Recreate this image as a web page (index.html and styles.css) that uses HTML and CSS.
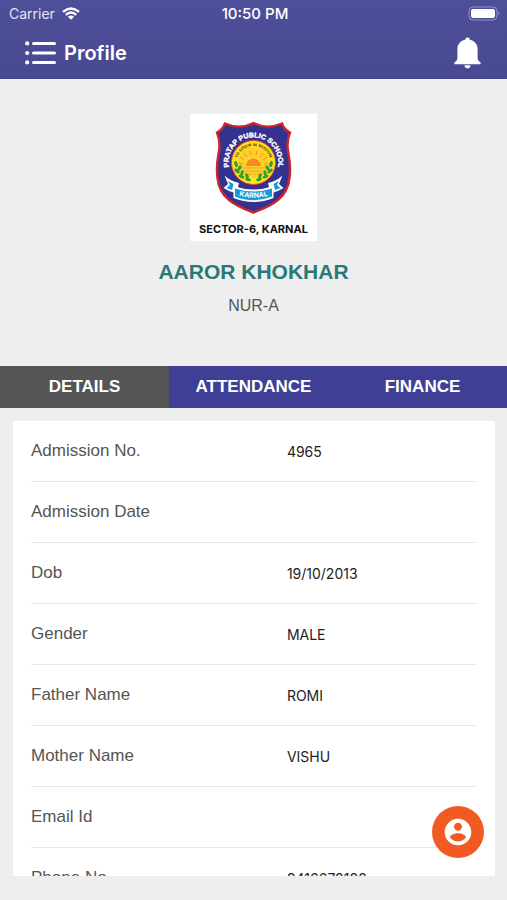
FILE: index.html
```html
<!DOCTYPE html>
<html lang="en">
<head>
<meta charset="utf-8">
<meta name="viewport" content="width=device-width, initial-scale=1">
<title>Profile</title>
<link rel="stylesheet" href="styles.css">
</head>
<body>

<header class="header">
  <div class="status">
    <div class="carrier">
      <span>Carrier</span>
      <svg width="18" height="13" viewBox="0 0 18 13" fill="none" stroke="#fff" stroke-width="2.4">
        <path d="M1 4.8Q9-2 17 4.8"/>
        <path d="M3.8 7.8Q9 3.4 14.2 7.8"/>
        <path d="M9 12.8L5.9 9.7Q9 7.3 12.1 9.7Z" fill="#fff" stroke="none"/>
      </svg>
    </div>
    <div class="time">10:50 PM</div>
    <div class="battery">
      <svg width="33" height="15" viewBox="0 0 33 15">
        <rect x="1" y="1" width="28" height="13" rx="4" fill="none" stroke="#9090c2"/>
        <rect x="3" y="3" width="24" height="9" rx="2" fill="#fff"/>
        <path d="M30.5 5.5Q32.6 7.5 30.5 9.5Z" fill="#9090c2"/>
      </svg>
    </div>
  </div>
  <div class="navbar">
    <button class="icon-btn" type="button" aria-label="Menu">
      <svg width="31" height="24" viewBox="0 0 31 24" fill="#fff">
        <circle cx="2.2" cy="2.4" r="2.1"/>
        <circle cx="2.2" cy="12" r="2.1"/>
        <circle cx="2.2" cy="21.4" r="2.1"/>
        <rect x="7" y="1" width="24" height="3" rx="1.5"/>
        <rect x="7" y="10.5" width="24" height="3" rx="1.5"/>
        <rect x="7" y="20" width="24" height="3" rx="1.5"/>
      </svg>
    </button>
    <h1>Profile</h1>
    <button class="icon-btn bell" type="button" aria-label="Notifications">
      <svg width="27" height="32" viewBox="0 0 27 32" fill="#fff">
        <path d="M13.5 0.5C12.2 0.5 11.4 1.4 11.2 2.8C6 4 3.4 7.6 3.4 12V20.5C3.4 23 2.4 24.3 0.4 25.4V27.2H26.6V25.4C24.6 24.3 23.6 23 23.6 20.5V12C23.6 7.6 21 4 15.8 2.8C15.6 1.4 14.8 0.5 13.5 0.5Z"/>
        <path d="M10.4 28.2H16.6C16.4 30.3 15.2 31.3 13.5 31.3C11.8 31.3 10.6 30.3 10.4 28.2Z"/>
      </svg>
    </button>
  </div>
</header>

<section class="student">
  <svg class="logo" viewBox="0 0 127 127" role="img" aria-label="Pratap Public School">
    <defs>
      <path id="arc-name" d="M39.8 55.5A24.8 24.8 0 1 1 87.2 55.5"/>
      <path id="arc-motto" d="M46.5 49A17 17 0 0 1 80.5 49"/>
      <path id="arc-city" d="M44 80Q63.500 87.500 83 80"/>
    </defs>
    <rect width="127" height="127" fill="#fff"/>
    <path d="M35 9.5Q50 16 63.5 9Q77 16 92 9.5Q94 15.5 100 18.5Q96 28 98.5 40Q101 53 99.5 64C97.5 83 84 91 63.5 98.5C43 91 29.5 83 27.5 64Q26 53 28.5 40Q31 28 27 18.5Q33 15.5 35 9.5Z" fill="#35318f" stroke="#c9252f" stroke-width="2.4"/>
    <circle cx="63.5" cy="48.5" r="22" fill="#ffe512" stroke="#e5484a"/>
    <circle cx="63.5" cy="48" r="15.5" fill="#fdd02a"/>
    <path d="M56 52A7.500 7.500 0 0 1 71 52Z" fill="#f58a25"/>
    <path d="M53 50L49 49M54 46L50 43M57 43L54 39M61 41L60 37M66 41L67 37M70 43L73 39M73 46L77 43M74 50L78 49" stroke="#f58a25"/>
    <path d="M52 54H75M54 57H73M57 60H70" stroke="#f2a529"/>
    <g fill="#339b3c">
      <ellipse cx="46" cy="50" rx="1.7" ry="3.2" transform="rotate(-15 46 50)"/>
      <ellipse cx="49.5" cy="54" rx="1.6" ry="3" transform="rotate(30 49.5 54)"/>
      <ellipse cx="47" cy="57" rx="1.6" ry="3.2" transform="rotate(-50 47 57)"/>
      <ellipse cx="52" cy="59" rx="1.6" ry="3" transform="rotate(10 52 59)"/>
      <ellipse cx="51.5" cy="62.5" rx="1.6" ry="3.2" transform="rotate(-65 51.5 62.5)"/>
      <ellipse cx="57" cy="62" rx="1.6" ry="3" transform="rotate(-25 57 62)"/>
      <ellipse cx="58" cy="65.5" rx="1.5" ry="3" transform="rotate(-75 58 65.5)"/>
      <ellipse cx="81" cy="50" rx="1.7" ry="3.2" transform="rotate(15 81 50)"/>
      <ellipse cx="77.5" cy="54" rx="1.6" ry="3" transform="rotate(-30 77.5 54)"/>
      <ellipse cx="80" cy="57" rx="1.6" ry="3.2" transform="rotate(50 80 57)"/>
      <ellipse cx="75" cy="59" rx="1.6" ry="3" transform="rotate(-10 75 59)"/>
      <ellipse cx="75.5" cy="62.5" rx="1.6" ry="3.2" transform="rotate(65 75.5 62.5)"/>
      <ellipse cx="70" cy="62" rx="1.6" ry="3" transform="rotate(25 70 62)"/>
      <ellipse cx="69" cy="65.5" rx="1.5" ry="3" transform="rotate(75 69 65.5)"/>
    </g>
    <path d="M34.5 61.5Q40 67 49 69L47 77L45 84L48 80L45 79Q38 77 33.5 74L38 70Z" fill="#fff"/>
    <path d="M92.5 61.5Q87 67 78 69L80 77L82 84L79 80L82 79Q89 77 93.5 74L89 70Z" fill="#fff"/>
    <path d="M38 67L43.5 70L42 76L36.5 74L40 71Z" fill="#169bd7"/>
    <path d="M89 67L83.5 70L85 76L90.5 74L87 71Z" fill="#169bd7"/>
    <path d="M43.5 72Q63.5 79 83.5 72V84Q63.5 92 43.5 84Z" fill="#fff"/>
    <path d="M45 74.5Q63.500 80.500 82 74.500V82.500Q63.500 90 45 82.500Z" fill="#169bd7"/>
    <text class="logo-name" text-anchor="middle"><textPath href="#arc-name" startOffset="50%">PRATAP PUBLIC SCHOOL</textPath></text>
    <text class="logo-motto" text-anchor="middle"><textPath href="#arc-motto" startOffset="50%">TO GROW IN WISDOM</textPath></text>
    <text class="logo-city" text-anchor="middle"><textPath href="#arc-city" startOffset="50%">KARNAL</textPath></text>
    <text class="logo-sector" x="63.5" y="119" text-anchor="middle">SECTOR-6, KARNAL</text>
  </svg>
  <h2>AAROR KHOKHAR</h2>
  <p>NUR-A</p>
</section>

<nav class="tabs">
  <button class="tab active" type="button">DETAILS</button>
  <button class="tab" type="button">ATTENDANCE</button>
  <button class="tab" type="button">FINANCE</button>
</nav>

<main class="card">
  <table class="details">
    <tr><th scope="row">Admission No.</th><td>4965</td></tr>
    <tr><th scope="row">Admission Date</th><td></td></tr>
    <tr><th scope="row">Dob</th><td>19/10/2013</td></tr>
    <tr><th scope="row">Gender</th><td>MALE</td></tr>
    <tr><th scope="row">Father Name</th><td>ROMI</td></tr>
    <tr><th scope="row">Mother Name</th><td>VISHU</td></tr>
    <tr><th scope="row">Email Id</th><td></td></tr>
    <tr><th scope="row">Phone No.</th><td>9416678188</td></tr>
  </table>
</main>

<button class="fab" type="button" aria-label="Account">
  <svg width="32" height="32" viewBox="0 0 24 24" fill="#fff">
    <path d="M12 2C6.48 2 2 6.48 2 12s4.48 10 10 10 10-4.48 10-10S17.52 2 12 2zm0 3c1.66 0 3 1.34 3 3s-1.34 3-3 3-3-1.34-3-3 1.34-3 3-3zm0 14.2c-2.5 0-4.71-1.28-6-3.22.03-1.99 4-3.08 6-3.08 1.99 0 5.97 1.09 6 3.08-1.29 1.94-3.5 3.22-6 3.22z"/>
  </svg>
</button>

</body>
</html>
```

FILE: styles.css
```css
* {
  box-sizing: border-box;
}

body {
  margin: 0;
  height: 100vh;
  display: flex;
  flex-direction: column;
  overflow: hidden;
  background: #eeeeee;
  color: #555;
  font-family: "Liberation Sans", Arial, sans-serif;
}

button {
  margin: 0;
  padding: 0;
  border: 0;
  background: none;
  font-family: inherit;
}

svg {
  display: block;
}

/* Header */

.header {
  background: linear-gradient(#4e4f99, #484990);
  color: #fff;
  font-family: Inter, sans-serif;
}

.status {
  display: grid;
  grid-template-columns: 1fr auto 1fr;
  align-items: center;
  height: 27px;
  padding: 0 6px 0 9px;
  font-size: 14px;
}

.carrier {
  display: flex;
  align-items: center;
  gap: 7px;
  color: #e4e4f4;
}

.time {
  font-size: 15px;
  font-weight: 500;
}

.battery {
  justify-self: end;
}

.navbar {
  display: flex;
  align-items: center;
  gap: 8px;
  height: 52px;
  padding: 0 26px 0 25px;
}

.navbar h1 {
  margin: 0;
  font-size: 20px;
  font-weight: 600;
}

.bell {
  margin-left: auto;
}

/* Student */

.student {
  display: flex;
  flex-direction: column;
  align-items: center;
  padding: 35px 0 50px;
}

.logo {
  width: 127px;
  height: 127px;
}

.logo-name {
  font: bold 7px "Liberation Sans", Arial, sans-serif;
  fill: #fff;
  stroke: #fff;
  stroke-width: 0.4px;
}

.logo-motto {
  font: bold 4px "Liberation Sans", Arial, sans-serif;
  fill: #333;
}

.logo-city {
  font: bold 7px Inter, sans-serif;
  fill: #fff;
}

.logo-sector {
  font: bold 11px Inter, sans-serif;
  fill: #111;
}

.student h2 {
  margin: 19px 0 0;
  color: #2a7878;
  font-size: 21px;
  line-height: 24px;
}

.student p {
  margin: 12px 0 0;
  font-size: 16px;
  line-height: 20px;
}

/* Tabs */

.tabs {
  display: flex;
  background: #3f3f95;
}

.tab {
  flex: 1;
  height: 42px;
  color: #fff;
  font-size: 17px;
  font-weight: bold;
}

.tab.active {
  background: #555;
}

/* Details */

.card {
  flex: 1;
  min-height: 0;
  overflow: hidden;
  margin: 13px 12px 24px 13px;
  padding: 0 19px 0 18px;
  background: #fff;
}

.details {
  width: 100%;
  table-layout: fixed;
  border-spacing: 0;
}

.details th,
.details td {
  height: 61px;
  padding: 0;
  border-bottom: 1px solid #e8e8e8;
  text-align: left;
}

.details th {
  width: 57.5%;
  font-size: 17px;
  font-weight: normal;
}

.details td {
  color: #222;
  font-family: Inter, sans-serif;
  font-size: 14px;
}

.fab {
  position: fixed;
  right: 23px;
  bottom: 42px;
  display: flex;
  align-items: center;
  justify-content: center;
  width: 52px;
  height: 52px;
  border-radius: 50%;
  background: #f15a22;
}
```
